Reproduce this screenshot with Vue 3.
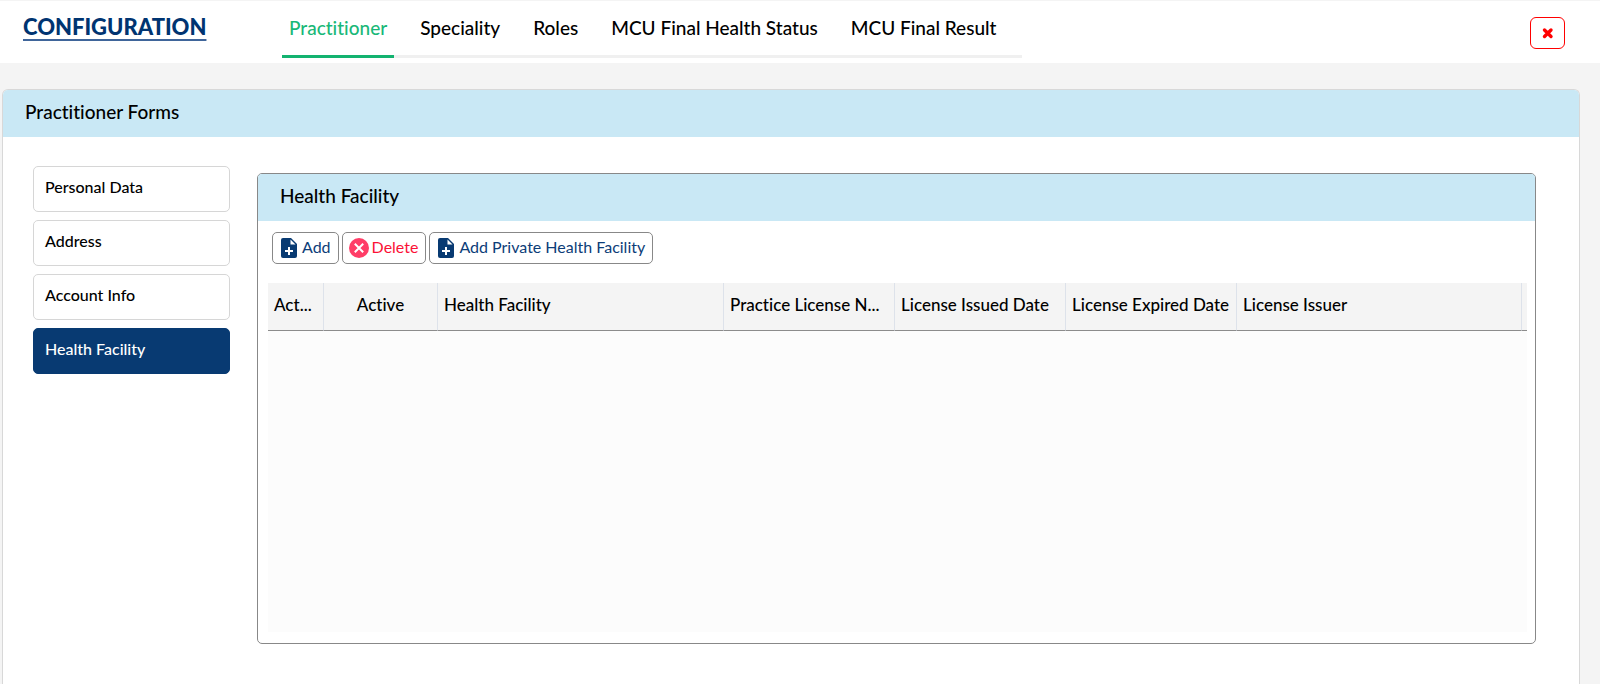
<script setup>
import { ref } from 'vue'

const tabs = ['Practitioner', 'Speciality', 'Roles', 'MCU Final Health Status', 'MCU Final Result']
const activeTab = ref('Practitioner')

const sections = ['Personal Data', 'Address', 'Account Info', 'Health Facility']
const activeSection = ref('Health Facility')

const columns = [
  { label: 'Act...', cls: 'col-action' },
  { label: 'Active', cls: 'col-active' },
  { label: 'Health Facility', cls: 'col-facility' },
  { label: 'Practice License N...', cls: 'col-license' },
  { label: 'License Issued Date', cls: 'col-license' },
  { label: 'License Expired Date', cls: 'col-license' },
  { label: 'License Issuer', cls: 'col-issuer' },
]
</script>

<template>
  <div class="page">
    <header class="topbar">
      <h1 class="title">CONFIGURATION</h1>
      <nav class="tabs">
        <a
          v-for="tab in tabs"
          :key="tab"
          href="#"
          class="tab"
          :class="{ active: tab === activeTab }"
          @click.prevent="activeTab = tab"
        >{{ tab }}</a>
      </nav>
      <button class="close" type="button" aria-label="Close">
        <svg width="12" height="12" viewBox="0 0 12 12">
          <path d="M2.5 3 L9 9.5 M9 3 L2.5 9.5" stroke="#f00" stroke-width="3.4" stroke-linecap="round" />
        </svg>
      </button>
    </header>

    <main class="card">
      <h2 class="card-head">Practitioner Forms</h2>
      <div class="card-body">
        <nav class="side">
          <button
            v-for="section in sections"
            :key="section"
            type="button"
            class="side-item"
            :class="{ selected: section === activeSection }"
            @click="activeSection = section"
          >{{ section }}</button>
        </nav>

        <section class="panel">
          <h3 class="panel-head">Health Facility</h3>
          <div class="toolbar">
            <button type="button" class="tool">
              <svg class="icon" width="20" height="20" viewBox="0 0 20 20">
                <path d="M4 0 H12 L18 6 V18 Q18 20 16 20 H4 Q2 20 2 18 V2 Q2 0 4 0 Z" fill="#083a72" />
                <path d="M11.5 1.5 V6.5 H16.5 Z" fill="#fff" />
                <path d="M10 9 V17 M6 13 H14" stroke="#fff" stroke-width="2" />
              </svg>
              <span>Add</span>
            </button>
            <button type="button" class="tool danger">
              <svg class="icon" width="20" height="20" viewBox="0 0 20 20">
                <circle cx="10" cy="10" r="10" fill="#ff3d67" />
                <path d="M5.8 5.8 L14.2 14.2 M14.2 5.8 L5.8 14.2" stroke="#fff" stroke-width="2" />
              </svg>
              <span>Delete</span>
            </button>
            <button type="button" class="tool">
              <svg class="icon" width="20" height="20" viewBox="0 0 20 20">
                <path d="M4 0 H12 L18 6 V18 Q18 20 16 20 H4 Q2 20 2 18 V2 Q2 0 4 0 Z" fill="#083a72" />
                <path d="M11.5 1.5 V6.5 H16.5 Z" fill="#fff" />
                <path d="M10 9 V17 M6 13 H14" stroke="#fff" stroke-width="2" />
              </svg>
              <span>Add Private Health Facility</span>
            </button>
          </div>
          <div class="grid">
            <table>
              <thead>
                <tr>
                  <th v-for="col in columns" :key="col.label" :class="col.cls" scope="col">{{ col.label }}</th>
                  <td class="col-end"></td>
                </tr>
              </thead>
            </table>
          </div>
        </section>
      </div>
    </main>
  </div>
</template>

<style>
body {
  margin: 0;
  background: #f4f4f4;
}
</style>

<style scoped>
.page {
  min-height: 100vh;
  box-sizing: border-box;
  display: flex;
  flex-direction: column;
  border-top: 1px solid #f4f4f4;
  font-family: Lato, "Liberation Sans", sans-serif;
  font-variant-ligatures: none;
  color: #000;
}

button {
  font-family: inherit;
  font-variant-ligatures: none;
  margin: 0;
  cursor: pointer;
}

.topbar {
  display: flex;
  align-items: flex-start;
  height: 62px;
  padding: 0 35px 0 23px;
  background: #fff;
}

.title {
  width: 259px;
  margin: 12px 0 0;
  font-size: 22px;
  line-height: 28px;
  font-weight: 900;
  color: #003471;
  text-decoration: underline;
  text-decoration-color: #3f659a;
  text-decoration-thickness: 2px;
  text-underline-offset: 4px;
}

.tabs {
  display: flex;
  box-shadow: inset 0 -3px #f0f0f0;
}

.tab {
  height: 54px;
  margin-right: 19px;
  padding: 0 7px;
  border-bottom: 3px solid transparent;
  font-size: 19px;
  font-weight: 500;
  line-height: 54px;
  color: #000;
  text-decoration: none;
}

.tab.active {
  color: #19b878;
  border-bottom-color: #13b370;
}

.close {
  display: flex;
  align-items: center;
  justify-content: center;
  width: 35px;
  height: 32px;
  margin: 16px 0 0 auto;
  padding: 0;
  border: 1px solid #f00;
  border-radius: 6px;
  background: #fff;
}

.card {
  flex: 1;
  margin: 26px 20px 0 2px;
  border: 1px solid #d8d8d8;
  border-bottom: 0;
  border-radius: 6px 6px 0 0;
  background: #fff;
  overflow: hidden;
}

.card-head,
.panel-head {
  margin: 0;
  padding: 0 22px 4px;
  background: #c9e8f5;
  font-size: 19px;
  line-height: 43px;
  font-weight: 500;
}

.card-body {
  display: flex;
  align-items: flex-start;
  gap: 27px;
  padding: 29px 43px 40px 30px;
}

.side {
  display: flex;
  flex-direction: column;
  flex: none;
  gap: 8px;
  width: 197px;
}

.side-item {
  height: 46px;
  padding: 0 11px 5px;
  border: 1px solid #d6d6d6;
  border-radius: 5px;
  background: #fff;
  font-size: 16px;
  font-weight: 500;
  text-align: left;
  color: #000;
}

.side-item.selected {
  border-color: #083a72;
  background: #083a72;
  color: #fff;
}

.panel {
  flex: 1;
  min-width: 0;
  margin-top: 7px;
  border: 1px solid #888;
  border-radius: 5px;
  overflow: hidden;
}

.toolbar {
  display: flex;
  gap: 3px;
  padding: 11px 14px 19px;
}

.tool {
  display: flex;
  align-items: center;
  height: 32px;
  gap: 3px;
  padding: 0 7px 0 6px;
  border: 1px solid #888;
  border-radius: 5px;
  background: #fff;
  font-size: 16px;
  line-height: 20px;
  color: #0d3d78;
}

.tool span {
  padding-bottom: 3px;
}

.danger {
  color: #fb1236;
}

.icon {
  flex: none;
}

.grid {
  min-height: 349px;
  margin: 0 8px 11px 10px;
  background: #fcfcfc;
}

table {
  width: 100%;
  table-layout: fixed;
  border-collapse: separate;
  border-spacing: 0;
}

th,
td {
  box-sizing: border-box;
  height: 48px;
  padding: 0 6px 4px;
  border-right: 1px solid #dde2ea;
  border-bottom: 1px solid #8c8c8c;
  background: #f4f4f4;
  font-size: 17px;
  font-weight: 500;
  text-align: left;
  white-space: nowrap;
  overflow: hidden;
  text-overflow: ellipsis;
}

.col-action {
  width: 56px;
}

.col-active {
  width: 114px;
  text-align: center;
}

.col-facility {
  width: 286px;
}

.col-license {
  width: 171px;
}

.col-end {
  width: 5px;
  padding: 0;
  border-right: 0;
}
</style>
